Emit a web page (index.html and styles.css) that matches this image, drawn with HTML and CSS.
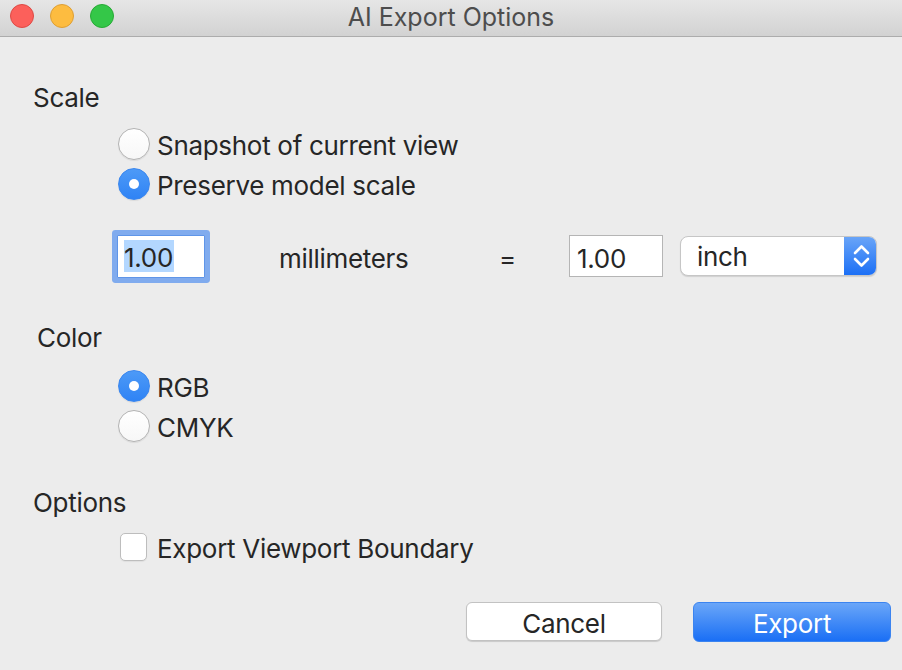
FILE: index.html
```html
<!DOCTYPE html>
<html>
<head>
<meta charset="utf-8">
<link rel="stylesheet" href="styles.css">
</head>
<body>
<div class="window">
  <div class="titlebar">
    <div class="lights">
      <span class="light red"></span>
      <span class="light yellow"></span>
      <span class="light green"></span>
    </div>
    <div class="title">AI Export Options</div>
  </div>
  <div class="content">
    <div class="label label-scale">Scale</div>
    <div class="options">
      <div class="opt"><span class="radio"></span><span class="txt">Snapshot of current view</span></div>
      <div class="opt"><span class="radio on"></span><span class="txt">Preserve model scale</span></div>
    </div>
    <div class="scale-row">
      <div class="field focused"><span class="sel">1.00</span></div>
      <div class="unit">millimeters</div>
      <div class="eq">=</div>
      <div class="field plain"><span class="txt">1.00</span></div>
      <div class="select">
        <span class="select-text">inch</span>
        <span class="stepper">
          <svg width="33" height="40" viewBox="0 0 33 40"><path d="M11 17 L17.5 10.5 L24 17" fill="none" stroke="#fff" stroke-width="2.6" stroke-linecap="round" stroke-linejoin="round"/><path d="M11 23 L17.5 29.5 L24 23" fill="none" stroke="#fff" stroke-width="2.6" stroke-linecap="round" stroke-linejoin="round"/></svg>
        </span>
      </div>
    </div>
    <div class="label label-color">Color</div>
    <div class="options">
      <div class="opt"><span class="radio on"></span><span class="txt">RGB</span></div>
      <div class="opt"><span class="radio"></span><span class="txt">CMYK</span></div>
    </div>
    <div class="label label-options">Options</div>
    <div class="options">
      <div class="opt check-opt"><span class="checkbox"></span><span class="txt">Export Viewport Boundary</span></div>
    </div>
    <div class="buttons">
      <div class="btn cancel">Cancel</div>
      <div class="btn primary">Export</div>
    </div>
  </div>
</div>
</body>
</html>
```

FILE: styles.css
```css
* { box-sizing: border-box; }
html, body {
  margin: 0;
  padding: 0;
  width: 902px;
  height: 670px;
  background: #ececec;
  overflow: hidden;
}
body {
  font-family: "Inter", "Liberation Sans", sans-serif;
  font-size: 26px;
  letter-spacing: -0.3px;
  color: #262626;
}
.window {
  width: 902px;
  height: 670px;
  display: flex;
  flex-direction: column;
}
.titlebar {
  height: 37px;
  flex: none;
  display: flex;
  align-items: center;
  position: relative;
  background: linear-gradient(#e6e6e6, #d2d2d2);
  border-bottom: 1px solid #acacac;
}
.lights {
  display: flex;
  gap: 16px;
  padding-left: 10px;
  height: 24px;
  margin-top: -5px;
}
.light {
  width: 24px;
  height: 24px;
  border-radius: 50%;
  display: block;
}
.red { background: #fc605b; border: 1px solid #de4a45; }
.yellow { background: #fdbc40; border: 1px solid #de9f34; }
.green { background: #34c748; border: 1px solid #27aa35; }
.title {
  position: absolute;
  left: 0;
  right: 0;
  top: 0;
  height: 36px;
  line-height: 34px;
  text-align: center;
  color: #4d4d4d;
  font-size: 25px;
  letter-spacing: 0;
}
.content {
  display: flex;
  flex-direction: column;
}
.label {
  height: 40px;
  line-height: 40px;
  padding-top: 1px;
}
.label-scale { margin-top: 40px; padding-left: 33px; }
.label-color { margin-top: 34px; padding-left: 37px; }
.label-options { margin-top: 36px; padding-left: 33px; }
.options {
  display: flex;
  flex-direction: column;
  padding-left: 118px;
}
.label-scale + .options { margin-top: 7px; }
.label-color + .options { margin-top: 9px; }
.label-options + .options { margin-top: 5px; }
.opt {
  height: 40px;
  display: flex;
  align-items: center;
  gap: 7px;
}
.txt { padding-top: 2px; }
.radio {
  width: 32px;
  height: 32px;
  border-radius: 50%;
  background: linear-gradient(#ffffff, #f7f7f7);
  border: 1px solid #b3b3b3;
  box-shadow: 0 1px 1px rgba(0,0,0,0.08);
  flex: none;
  position: relative;
}
.radio.on {
  background: linear-gradient(#4d9af7, #2f83f5);
  border: 1px solid #3a86ee;
}
.radio.on::after {
  content: "";
  position: absolute;
  left: 10px;
  top: 10px;
  width: 10px;
  height: 10px;
  border-radius: 50%;
  background: #fff;
}
.check-opt { gap: 10px; padding-left: 2px; }
.checkbox {
  width: 27px;
  height: 28px;
  border-radius: 5px;
  background: #fff;
  border: 1px solid #bdbdbd;
  box-shadow: 0 1px 1px rgba(0,0,0,0.06);
  flex: none;
}
.scale-row {
  display: flex;
  align-items: center;
  height: 54px;
  margin-top: 25px;
  padding-left: 117px;
}
.field {
  height: 43px;
  background: #fff;
  display: flex;
  align-items: center;
  flex: none;
}
.field.focused {
  width: 88px;
  border: 1px solid #5f95e8;
  box-shadow: 0 0 0 5px #80abee;
  border-radius: 1px;
  padding-left: 6px;
}
.sel {
  background: #b3d7ff;
  line-height: 32px;
  height: 32px;
  padding-top: 2px;
  padding-right: 1px;
}
.unit {
  margin-left: 74px;
  width: 220px;
  flex: none;
  padding-top: 4px;
}
.eq {
  width: 70px;
  flex: none;
  padding-top: 4px;
}
.field.plain {
  width: 94px;
  height: 42px;
  border: 1px solid #b5b5b5;
  padding-left: 7px;
}
.field.plain .txt { padding-top: 4px; }
.select {
  margin-left: 17px;
  width: 197px;
  height: 40px;
  display: flex;
  background: #fff;
  border-radius: 8px;
  border: 1px solid #c6c6c6;
  box-shadow: 0 1px 1px rgba(0,0,0,0.12);
  overflow: hidden;
  flex: none;
}
.select-text {
  flex: 1;
  padding-left: 16px;
  line-height: 38px;
  padding-top: 1px;
}
.stepper {
  width: 33px;
  height: 40px;
  margin-top: -1px;
  margin-right: -1px;
  background: linear-gradient(#6ba6f8, #1a6ef5);
  display: block;
}
.stepper svg { display: block; }
.buttons {
  display: flex;
  margin-top: 35px;
  padding-left: 466px;
  gap: 31px;
}
.btn {
  height: 40px;
  line-height: 38px;
  text-align: center;
  border-radius: 6px;
  flex: none;
}
.cancel {
  width: 196px;
  height: 39px;
  background: #fff;
  border: 1px solid #c2c2c2;
  box-shadow: 0 1px 1px rgba(0,0,0,0.15);
  padding-top: 2px;
}
.primary {
  width: 198px;
  color: #fff;
  background: linear-gradient(#6aa6f8, #1a6ff5);
  border: 1px solid #3b84f0;
  padding-top: 2px;
}
```
